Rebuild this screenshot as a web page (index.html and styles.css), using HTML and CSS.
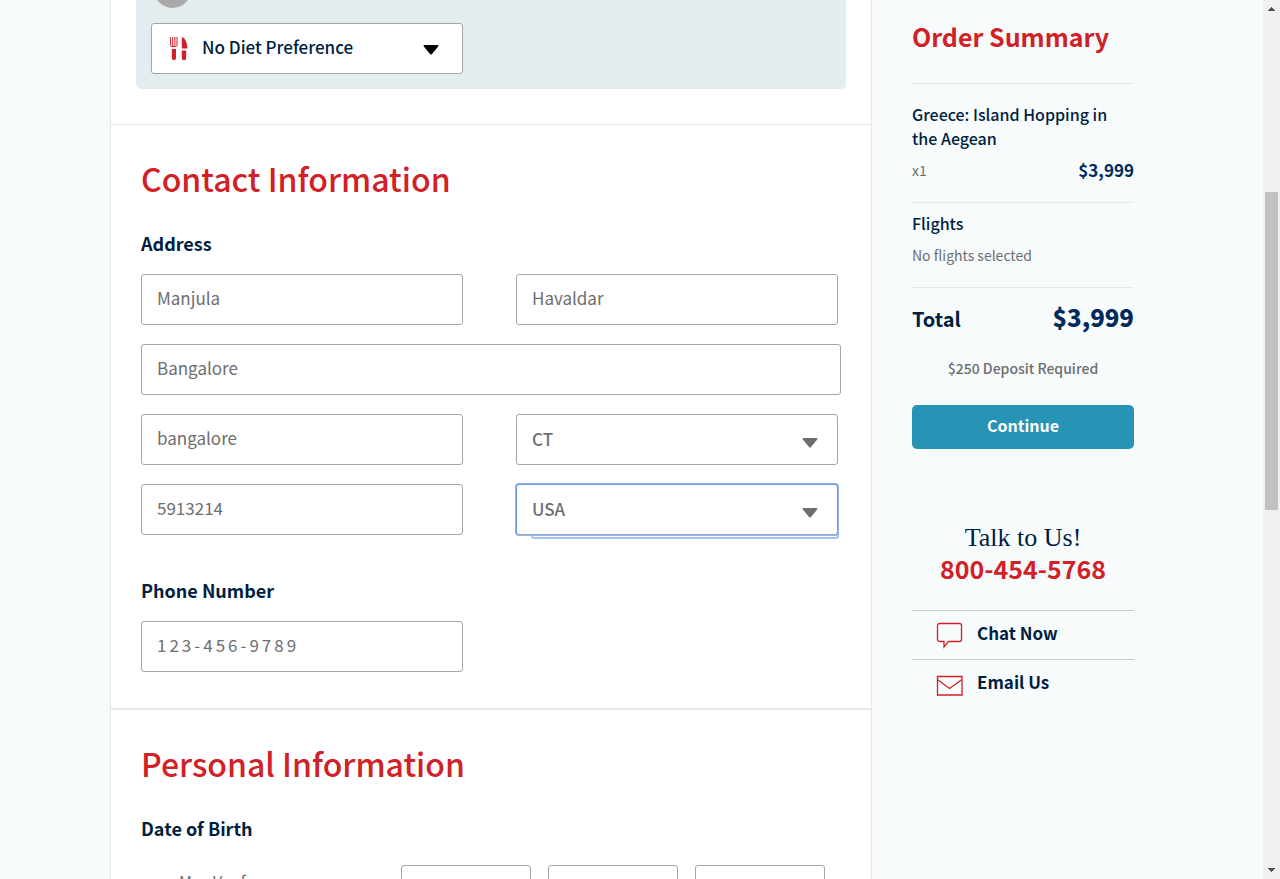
FILE: index.html
```html
<!DOCTYPE html>
<html lang="en">
<head>
<meta charset="utf-8">
<title>Checkout</title>
<link rel="stylesheet" href="styles.css">
</head>
<body>
<div class="viewport">
  <div class="page">
    <main class="main">
      <section class="traveler">
        <div class="traveler-card">
          <div class="avatar-clip"><span class="avatar"></span></div>
          <div class="select-wrap diet">
            <svg class="utensils" width="18" height="23" viewBox="0 0 18 23" aria-hidden="true">
              <path d="M.6 0v8.400Q.6 9.500 2 9.500h3.600Q7 9.500 7 8.400V0M2.700 0v9M4.900 0v9" fill="none" stroke="#d22027" stroke-width="1"/>
              <path d="M1.800 12h4.200v9a1.500 1.500 0 0 1-4.200 0zM11.800 0c3.200.6 5.200 5 5.700 11.400h-5.700zM11.800 13.600h4.400V21a1.500 1.500 0 0 1-4.400 0z" fill="#d22027"/>
            </svg>
            <select class="control select" aria-label="Diet preference"><option>No Diet Preference</option></select>
            <svg class="caret" width="16" height="10" viewBox="0 0 16 10" aria-hidden="true"><path d="M1 0h14q1 .8 0 1.800L9 9Q8 10 7 9L1 1.800Q0 .8 1 0z"/></svg>
          </div>
        </div>
      </section>

      <section class="section">
        <h2 class="title">Contact Information</h2>
        <h3 class="label">Address</h3>
        <div class="fields">
          <input class="control" type="text" value="Manjula" aria-label="First name">
          <input class="control" type="text" value="Havaldar" aria-label="Last name">
          <input class="control wide" type="text" value="Bangalore" aria-label="Street address">
          <input class="control" type="text" value="bangalore" aria-label="City">
          <div class="select-wrap">
            <select class="control select" aria-label="State"><option>CT</option></select>
            <svg class="caret" width="16" height="10" viewBox="0 0 16 10" aria-hidden="true"><path d="M1 0h14q1 .8 0 1.800L9 9Q8 10 7 9L1 1.800Q0 .8 1 0z"/></svg>
          </div>
          <input class="control" type="text" value="5913214" aria-label="Postal code">
          <div class="select-wrap focused">
            <select class="control select" aria-label="Country"><option>USA</option></select>
            <svg class="caret" width="16" height="10" viewBox="0 0 16 10" aria-hidden="true"><path d="M1 0h14q1 .8 0 1.800L9 9Q8 10 7 9L1 1.800Q0 .8 1 0z"/></svg>
          </div>
        </div>
        <label class="label phone-label" for="phone">Phone Number</label>
        <div class="fields">
          <input class="control phone" id="phone" type="tel" value="123-456-9789">
        </div>
      </section>

      <section class="section">
        <h2 class="title">Personal Information</h2>
        <h3 class="label">Date of Birth</h3>
        <div class="birth">
          <span class="birth-name">May Vauf</span>
          <input class="control" type="text" aria-label="Month">
          <input class="control" type="text" aria-label="Day">
          <input class="control" type="text" aria-label="Year">
        </div>
      </section>
    </main>

    <aside class="summary">
      <h2 class="summary-title">Order Summary</h2>
      <div class="item">
        <h3 class="item-name">Greece: Island Hopping in the Aegean</h3>
        <div class="line"><span class="muted">x1</span><strong class="price">$3,999</strong></div>
      </div>
      <div class="flights">
        <h3 class="item-name">Flights</h3>
        <p class="muted">No flights selected</p>
      </div>
      <div class="total"><span>Total</span><strong class="total-price">$3,999</strong></div>
      <p class="deposit">$250 Deposit Required</p>
      <button class="continue" type="button">Continue</button>
      <div class="talk">
        <p class="talk-title">Talk to Us!</p>
        <a class="talk-phone" href="tel:8004545768">800-454-5768</a>
      </div>
      <a class="contact" href="#chat">
        <svg width="28" height="28" viewBox="0 0 28 28" aria-hidden="true"><path d="M3.500 2.500h20a2 2 0 0 1 2 2v14a2 2 0 0 1-2 2H12.500L8 26V20.500h-4.500a2 2 0 0 1-2-2V4.500a2 2 0 0 1 2-2z"/></svg>
        Chat Now
      </a>
      <a class="contact" href="#email">
        <svg width="28" height="28" viewBox="0 0 28 28" aria-hidden="true"><path d="M1.500 6.500h24.500v18.500h-24.500zM1.500 9.500 13.500 18.500 26 9.500"/></svg>
        Email Us
      </a>
    </aside>
  </div>

  <div class="scrollbar" aria-hidden="true">
    <svg width="7" height="4" viewBox="0 0 7 4"><path d="M3 0h1v1h1v1h1v1h1v1H0V3h1V2h1V1h1z"/></svg>
    <div class="track"><div class="thumb"></div></div>
    <svg width="7" height="4" viewBox="0 0 7 4"><path d="M0 0h7v1H6v1H5v1H4v1H3V3H2V2H1V1H0z"/></svg>
  </div>
</div>
</body>
</html>
```
FILE: styles.css
```css
* { box-sizing: border-box; }

body {
  margin: 0;
  background: #f7fbfc;
  color: #001e41;
  font-family: "Noto Sans CJK SC", "Noto Sans", sans-serif;
}

h2, h3, p { margin: 0; }

.viewport {
  display: flex;
  height: 100vh;
  overflow: hidden;
}

.page {
  display: grid;
  grid-template-columns: minmax(0, 1fr) 281px;
  flex: 1;
  max-width: 1043px;
  min-width: 0;
  margin: 0 auto;
}

.main {
  background: #fff;
  border: solid #e6e7e8;
  border-width: 0 1px;
}

.traveler {
  padding: 0 25px 35px;
  border-bottom: 1px solid #e6e7e8;
}

.traveler-card {
  padding: 0 15px 15px;
  background: #e3ecee;
  border-radius: 0 0 5px 5px;
}

.avatar-clip {
  display: flex;
  align-items: flex-end;
  height: 8px;
  margin-bottom: 15px;
  padding-left: 3px;
  overflow: hidden;
}

.avatar {
  flex: none;
  width: 37px;
  height: 37px;
  border-radius: 50%;
  background: #a9a9a9;
}

.control {
  display: block;
  width: 100%;
  height: 51px;
  padding: 0 15px 4px;
  border: 1px solid #a5a6a8;
  border-radius: 3px;
  background: #fff;
  color: #6d6e70;
  font: 400 17px/24px "Noto Sans CJK SC", "Noto Sans", sans-serif;
}

.select-wrap { position: relative; }

.select {
  appearance: none;
  padding-bottom: 1px;
  font-weight: 500;
}

.caret {
  position: absolute;
  right: 20px;
  top: 24px;
  fill: #6d6e70;
}

.diet { max-width: 312px; }

.diet .control {
  padding: 0 50px 4px;
  color: #001e41;
}

.diet .caret {
  right: 24px;
  top: 22px;
  fill: #000;
}

.utensils {
  position: absolute;
  left: 19px;
  top: 14px;
}

.section {
  padding: 30px 30px 36px;
  border-bottom: 2px solid #e6e7e8;
}

.title {
  margin-bottom: 30px;
  color: #d22027;
  font-size: 32px;
  font-weight: 500;
  line-height: 46px;
}

.label {
  display: block;
  margin-bottom: 19px;
  font-size: 18px;
  font-weight: 700;
  line-height: 24px;
}

.fields {
  display: grid;
  grid-template-columns: 46% 46%;
  gap: 19px 53px;
}

.wide {
  grid-column: 1 / -1;
  width: auto;
  margin-right: -3px;
}

.phone-label { margin-top: 43px; }

.phone { letter-spacing: 3px; }

.focused::before {
  content: "";
  position: absolute;
  left: 15px;
  right: -1px;
  bottom: -4px;
  height: 10px;
  border: 2px solid #a4c3fa;
  border-radius: 3px;
}

.focused .control {
  position: relative;
  border-color: #7098da #7098da #a5a6a8;
  box-shadow: 0 0 0 1px #8fb4f5;
}

.birth {
  display: grid;
  grid-template-columns: minmax(0, 1fr) 130px 130px 130px;
  gap: 17px;
  padding: 6px 16px 0 38px;
}

.birth-name {
  padding-top: 4px;
  color: #6d6e70;
  font-size: 16px;
  line-height: 24px;
}

.summary { padding: 16px 19px 0 40px; }

.summary-title {
  padding-bottom: 27px;
  border-bottom: 1px solid #e3e8ea;
  color: #d22027;
  font-size: 25px;
  font-weight: 700;
  line-height: 40px;
}

.item {
  padding: 18px 0 20px;
  border-bottom: 1px solid #e3e8ea;
}

.item-name {
  margin-bottom: 8px;
  font-size: 16px;
  font-weight: 500;
  line-height: 24px;
}

.line {
  display: flex;
  justify-content: space-between;
  line-height: 24px;
}

.muted {
  color: #6d6e70;
  font-size: 14px;
  line-height: 24px;
}

.price {
  color: #002a5c;
  font-size: 17px;
}

.flights {
  padding: 8px 0 20px;
  border-bottom: 1px solid #e3e8ea;
}

.total {
  display: flex;
  justify-content: space-between;
  align-items: baseline;
  padding-top: 9px;
  font-size: 20px;
  font-weight: 700;
  line-height: 40px;
}

.total-price {
  color: #002a5c;
  font-size: 24px;
}

.deposit {
  margin: 17px 0 25px;
  color: #6d6e70;
  font-size: 14px;
  font-weight: 500;
  line-height: 24px;
  text-align: center;
}

.continue {
  display: block;
  width: 100%;
  height: 44px;
  padding: 0 0 4px;
  border: 0;
  border-radius: 5px;
  background: #2793b5;
  color: #fff;
  font: 700 16px/24px "Noto Sans CJK SC", "Noto Sans", sans-serif;
}

.talk {
  padding: 73px 0 28px;
  text-align: center;
}

.talk-title {
  font: 26px/32px "Liberation Serif", serif;
}

.talk-phone {
  display: block;
  color: #d22027;
  font-size: 25px;
  font-weight: 700;
  line-height: 28px;
  text-decoration: none;
}

.contact {
  display: flex;
  gap: 13px;
  height: 49px;
  padding: 10px 24px;
  border-top: 1px solid #c7c9cb;
  color: #001e41;
  font-size: 17px;
  font-weight: 700;
  line-height: 23px;
  text-decoration: none;
}

.contact svg {
  flex: none;
  fill: none;
  stroke: #d22027;
  stroke-width: 1.3;
}

.scrollbar {
  display: flex;
  flex: 0 0 17px;
  flex-direction: column;
  align-items: center;
  padding: 7px 0;
  background: #f0f0f0;
}

.scrollbar svg { fill: #505050; }

.track {
  flex: 1;
  width: 13px;
  padding-top: 181px;
}

.thumb {
  height: 47%;
  background: #c1c1c1;
}
```
